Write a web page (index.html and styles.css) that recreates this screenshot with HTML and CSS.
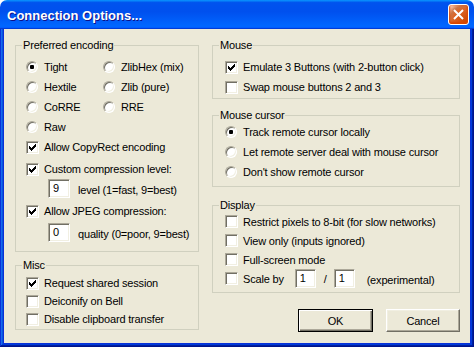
FILE: index.html
```html
<!DOCTYPE html>
<html>
<head>
<meta charset="utf-8">
<link rel="stylesheet" href="styles.css">
</head>
<body>
<div class="window">
  <div class="titlebar">
    <span class="title">Connection Options...</span>
    <span class="close"><svg width="19" height="19" viewBox="0 0 19 19"><path d="M5 5L14 14M14 5L5 14" stroke="#fff" stroke-width="2" fill="none"/></svg></span>
  </div>
  <div class="frame">
    <div class="client">
      <div class="col">
        <fieldset class="group enc">
          <legend>Preferred encoding</legend>
          <div class="body">
            <div class="radios">
              <div class="opt"><span class="radio on"></span>Tight</div>
              <div class="opt"><span class="radio"></span>ZlibHex (mix)</div>
              <div class="opt"><span class="radio"></span>Hextile</div>
              <div class="opt"><span class="radio"></span>Zlib (pure)</div>
              <div class="opt"><span class="radio"></span>CoRRE</div>
              <div class="opt"><span class="radio"></span>RRE</div>
              <div class="opt"><span class="radio"></span>Raw</div>
            </div>
            <div class="opt"><span class="check on"><svg width="9" height="9" viewBox="0 0 9 9" shape-rendering="crispEdges"><path d="M1 3h1v3H1z M2 4h1v3H2z M3 5h1v3H3z M4 4h1v3H4z M5 3h1v3H5z M6 2h1v3H6z M7 1h1v3H7z" fill="#000"/></svg></span>Allow CopyRect encoding</div>
            <div class="opt gap2"><span class="check on"><svg width="9" height="9" viewBox="0 0 9 9" shape-rendering="crispEdges"><path d="M1 3h1v3H1z M2 4h1v3H2z M3 5h1v3H3z M4 4h1v3H4z M5 3h1v3H5z M6 2h1v3H6z M7 1h1v3H7z" fill="#000"/></svg></span>Custom compression level:</div>
            <div class="sub"><span class="edit">9</span><span class="note">level (1=fast, 9=best)</span></div>
            <div class="opt gap3"><span class="check on"><svg width="9" height="9" viewBox="0 0 9 9" shape-rendering="crispEdges"><path d="M1 3h1v3H1z M2 4h1v3H2z M3 5h1v3H3z M4 4h1v3H4z M5 3h1v3H5z M6 2h1v3H6z M7 1h1v3H7z" fill="#000"/></svg></span>Allow JPEG compression:</div>
            <div class="sub gap2"><span class="edit">0</span><span class="note">quality (0=poor, 9=best)</span></div>
          </div>
        </fieldset>
        <fieldset class="group misc">
          <legend>Misc</legend>
          <div class="body">
            <div class="opt"><span class="check on"><svg width="9" height="9" viewBox="0 0 9 9" shape-rendering="crispEdges"><path d="M1 3h1v3H1z M2 4h1v3H2z M3 5h1v3H3z M4 4h1v3H4z M5 3h1v3H5z M6 2h1v3H6z M7 1h1v3H7z" fill="#000"/></svg></span>Request shared session</div>
            <div class="opt"><span class="check"></span>Deiconify on Bell</div>
            <div class="opt"><span class="check"></span>Disable clipboard transfer</div>
          </div>
        </fieldset>
      </div>
      <div class="col">
        <fieldset class="group mouse">
          <legend>Mouse</legend>
          <div class="body">
            <div class="opt"><span class="check on"><svg width="9" height="9" viewBox="0 0 9 9" shape-rendering="crispEdges"><path d="M1 3h1v3H1z M2 4h1v3H2z M3 5h1v3H3z M4 4h1v3H4z M5 3h1v3H5z M6 2h1v3H6z M7 1h1v3H7z" fill="#000"/></svg></span>Emulate 3 Buttons (with 2-button click)</div>
            <div class="opt"><span class="check"></span>Swap mouse buttons 2 and 3</div>
          </div>
        </fieldset>
        <fieldset class="group cursor">
          <legend>Mouse cursor</legend>
          <div class="body">
            <div class="opt"><span class="radio on"></span>Track remote cursor locally</div>
            <div class="opt"><span class="radio"></span>Let remote server deal with mouse cursor</div>
            <div class="opt"><span class="radio"></span>Don't show remote cursor</div>
          </div>
        </fieldset>
        <fieldset class="group display">
          <legend>Display</legend>
          <div class="body">
            <div class="opt"><span class="check"></span>Restrict pixels to 8-bit (for slow networks)</div>
            <div class="opt"><span class="check"></span>View only (inputs ignored)</div>
            <div class="opt"><span class="check"></span>Full-screen mode</div>
            <div class="opt"><span class="check"></span>Scale by<span class="edit small first">1</span><span class="slash">/</span><span class="edit small">1</span><span class="exp">(experimental)</span></div>
          </div>
        </fieldset>
        <div class="buttons">
          <span class="btn default">OK</span>
          <span class="btn cancel">Cancel</span>
        </div>
      </div>
    </div>
  </div>
</div>
</body>
</html>
```
FILE: styles.css
```css
* { box-sizing: border-box; }
html, body { margin: 0; padding: 0; background: #ffffff; }
body { font-family: "Liberation Sans", Arial, sans-serif; font-size: 11px; letter-spacing: -0.18px; color: #000; }

.window { width: 474px; height: 347px; display: flex; flex-direction: column; }

.titlebar {
  flex: none; height: 29px; display: flex; align-items: center; justify-content: space-between;
  padding: 0 5px 0 7px;
  border-radius: 7px 7px 0 0;
  background: linear-gradient(180deg, #0997ff 0, #0053ee 9%, #0050ee 40%, #0066ff 88%, #0066ff 93%, #005bff 95%, #003dd7 97%, #003dd7 100%);
}
.title { color: #fff; font-weight: bold; font-size: 13px; letter-spacing: 0; text-shadow: 1px 1px #0f1089; padding-top: 1px; }
.close {
  width: 21px; height: 21px; border: 1px solid #fff; border-radius: 3px; display: flex; align-items: center; justify-content: center;
  background: radial-gradient(circle at 90% 90%, #cc4600 0%, #dc6527 55%, #cd7546 70%, #ffccb2 90%, #ffffff 100%);
  box-shadow: inset 0 -1px 2px 1px #da4600;
}
.close svg { display: block; }

.frame {
  flex: 1; padding: 0 4px 4px; background: #0831d9;
  box-shadow: inset -1px -1px #00138c, inset 1px 0 #0831d9, inset -2px -2px #001ea0, inset 2px 0 #166aee, inset -3px -3px #003bda, inset 3px 0 #0855dd;
}
.client {
  height: 100%; background: #ece9d8; padding: 10px 10px 0 11px;
  display: grid; grid-template-columns: 184px 248px; column-gap: 13px; align-content: start;
}
.col { display: flex; flex-direction: column; }

.group { margin: 0; padding: 0; border: 1px solid #d0d0bf; min-width: 0; }
.group legend { margin-left: 6px; padding: 0 1px; line-height: 13px; height: 13px; }
.enc { height: 213px; }
.enc .body { padding: 5px 0 0 10px; }
.misc { height: 71px; margin-top: 7px; }
.misc .body { padding: 2px 0 0 10px; }
.misc .opt { height: 18px; }
.mouse { height: 60px; }
.mouse .body { padding: 5px 0 0 12px; }
.cursor { height: 78px; margin-top: 10px; }
.cursor .body { padding: 0 0 0 12px; }
.display { height: 94px; margin-top: 12px; }
.display .body { padding: 0 0 0 12px; }
.display .opt { height: 19px; }

.radios { display: grid; grid-template-columns: 77px 1fr; }
.opt { display: flex; align-items: center; height: 20px; white-space: nowrap; }
.gap2 { margin-top: 2px; }
.gap3 { margin-top: 3px; }

.check, .radio {
  flex: none; position: relative; background: #fff;
  border: 1px solid; border-color: #aca899 #ffffff #ffffff #aca899;
  box-shadow: inset 1px 1px #716f64, inset -1px -1px #f1efe2;
}
.check { width: 13px; height: 13px; margin-right: 5px; }
.check svg { display: block; margin: 1px; }
.radio { width: 12px; height: 12px; border-radius: 50%; margin-right: 6px; }
.radio.on::after {
  content: ""; position: absolute; left: 3px; top: 3px; width: 4px; height: 4px; border-radius: 1px; background: #000;
}

.sub { display: flex; align-items: center; height: 19px; padding-left: 22px; }
.edit {
  flex: none; width: 22px; height: 19px; background: #fff; padding: 2px 0 0 4px; line-height: 13px;
  border: 1px solid; border-color: #aca899 #ffffff #ffffff #aca899;
  box-shadow: inset 1px 1px #716f64, inset -1px -1px #f1efe2;
}
.note { margin-left: 8px; padding-top: 2px; }
.edit.small { width: 21px; }
.edit.first { margin-left: 11px; }
.slash { margin: 0 7px 0 8px; }
.exp { margin-left: 12px; padding-top: 2px; }

.buttons { display: flex; justify-content: flex-end; gap: 13px; margin-top: 16px; }
.btn {
  height: 23px; display: flex; align-items: center; justify-content: center; background: #ece9d8;
  border: 1px solid; border-color: #ffffff #716f64 #716f64 #ffffff;
  box-shadow: inset -1px -1px #aca899, inset 1px 1px #f1efe2;
}
.btn.default { width: 75px; border: 1px solid #000; box-shadow: inset 1px 1px #fff, inset -1px -1px #716f64, inset -2px -2px #aca899; }
.btn.cancel { width: 74px; }
```
